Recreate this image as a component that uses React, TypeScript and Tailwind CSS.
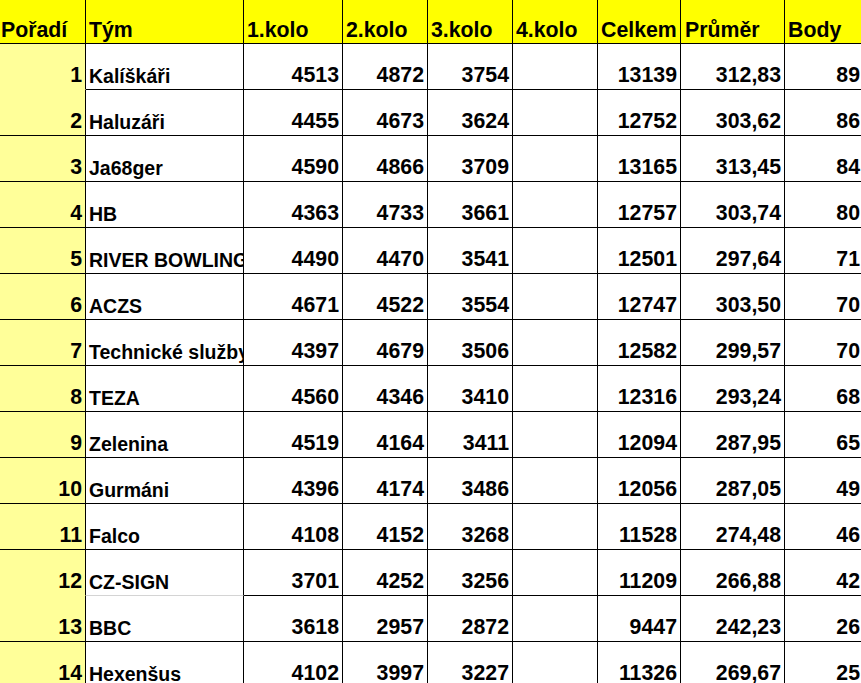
const rows: [number, string, string, string, string, string, string, string][] = [
  [1, 'Kalíškáři', '4513', '4872', '3754', '13139', '312,83', '89'],
  [2, 'Haluzáři', '4455', '4673', '3624', '12752', '303,62', '86'],
  [3, 'Ja68ger', '4590', '4866', '3709', '13165', '313,45', '84'],
  [4, 'HB', '4363', '4733', '3661', '12757', '303,74', '80'],
  [5, 'RIVER BOWLING', '4490', '4470', '3541', '12501', '297,64', '71'],
  [6, 'ACZS', '4671', '4522', '3554', '12747', '303,50', '70'],
  [7, 'Technické služby', '4397', '4679', '3506', '12582', '299,57', '70'],
  [8, 'TEZA', '4560', '4346', '3410', '12316', '293,24', '68'],
  [9, 'Zelenina', '4519', '4164', '3411', '12094', '287,95', '65'],
  [10, 'Gurmáni', '4396', '4174', '3486', '12056', '287,05', '49'],
  [11, 'Falco', '4108', '4152', '3268', '11528', '274,48', '46'],
  [12, 'CZ-SIGN', '3701', '4252', '3256', '11209', '266,88', '42'],
  [13, 'BBC', '3618', '2957', '2872', '9447', '242,23', '26'],
  [14, 'Hexenšus', '4102', '3997', '3227', '11326', '269,67', '25'],
]

// rows whose Pořadí cell has no bottom line
const noRankLine = [1, 12]

const numCell = 'shrink-0 flex items-end justify-end pr-[3px] pb-[3px] border-r border-b border-black'
const headCell = 'shrink-0 flex items-end pl-[3px] pb-[2px] border-r border-b border-black whitespace-nowrap'

export default function App() {
  return (
    <div className="w-[861px] h-[683px] overflow-hidden bg-white text-black font-bold" style={{ fontFamily: '"Liberation Sans", Arial, sans-serif' }}>
      {/* Header */}
      <div className="flex h-[44px] bg-[#ffff00] text-[21.3px] leading-none">
        <div className={'w-[86px] !pl-[1px] ' + headCell}>Pořadí</div>
        <div className={'w-[158px] ' + headCell}>Tým</div>
        <div className={'w-[99px] ' + headCell}>1.kolo</div>
        <div className={'w-[85px] ' + headCell}>2.kolo</div>
        <div className={'w-[85px] ' + headCell}>3.kolo</div>
        <div className={'w-[85px] ' + headCell}>4.kolo</div>
        <div className={'w-[83px] ' + headCell}>Celkem</div>
        <div className={'w-[104px] !pl-[4px] ' + headCell}>Průměr</div>
        <div className={'w-[79px] ' + headCell}>Body</div>
      </div>

      {/* Body rows */}
      {rows.map(([rank, team, k1, k2, k3, total, avg, pts]) => (
        <div key={rank} className="flex h-[46px] text-[21.3px] leading-none">
          <div
            className={
              'w-[86px] shrink-0 flex items-end justify-end pr-[3px] pb-[3px] bg-[#ffff99] border-r border-black border-b ' +
              (noRankLine.includes(rank) ? 'border-b-[#ffff99]' : '')
            }
          >
            {rank}
          </div>
          <div
            className={
              'w-[158px] shrink-0 flex items-end pl-[3px] pb-[3px] border-r border-b border-black overflow-hidden whitespace-nowrap text-[19.5px] ' +
              (rank === 12 ? 'border-b-[#d4d4d4]' : '')
            }
          >
            {team}
          </div>
          <div className={'w-[99px] ' + numCell}>{k1}</div>
          <div className={'w-[85px] ' + numCell}>{k2}</div>
          <div className={'w-[85px] ' + numCell}>{k3}</div>
          <div className={'w-[85px] ' + numCell}></div>
          <div className={'w-[83px] ' + numCell}>{total}</div>
          <div className={'w-[104px] ' + numCell}>{avg}</div>
          <div className={'w-[79px] ' + numCell}>{pts}</div>
        </div>
      ))}
    </div>
  )
}
